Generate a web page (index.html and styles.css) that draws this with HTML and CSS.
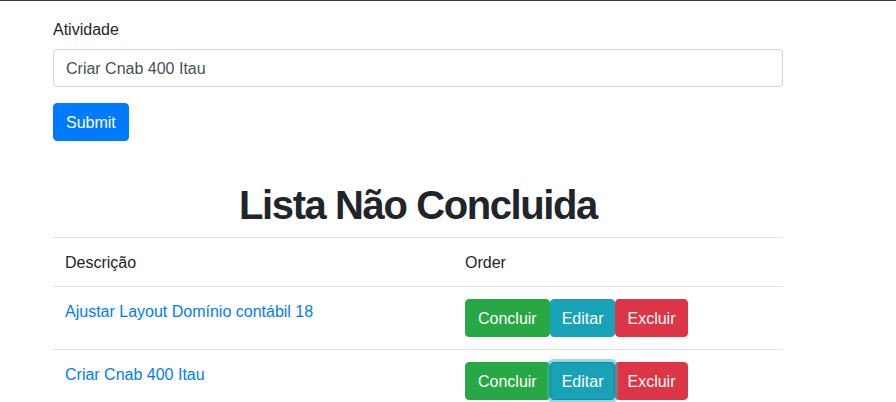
FILE: index.html
```html
<!DOCTYPE html>
<html lang="pt">
<head>
<meta charset="utf-8">
<title>Lista</title>
<link rel="stylesheet" href="styles.css">
</head>
<body>
<div class="topbar"></div>
<div class="container">
  <form class="form">
    <div class="form-group">
      <label class="label" for="atividade">Atividade</label>
      <input class="input" id="atividade" type="text" value="Criar Cnab 400 Itau">
    </div>
    <button type="button" class="btn btn-primary">Submit</button>
  </form>
  <h1 class="title">Lista Não Concluida</h1>
  <table class="table">
    <thead>
      <tr><th class="col-desc">Descrição</th><th>Order</th></tr>
    </thead>
    <tbody>
      <tr>
        <td><a class="link" href="#">Ajustar Layout Domínio contábil 18</a></td>
        <td><div class="actions"><button type="button" class="btn btn-success">Concluir</button><button type="button" class="btn btn-info">Editar</button><button type="button" class="btn btn-danger">Excluir</button></div></td>
      </tr>
      <tr>
        <td><a class="link" href="#">Criar Cnab 400 Itau</a></td>
        <td><div class="actions"><button type="button" class="btn btn-success">Concluir</button><button type="button" class="btn btn-info is-focused">Editar</button><button type="button" class="btn btn-danger">Excluir</button></div></td>
      </tr>
    </tbody>
  </table>
</div>
</body>
</html>
```

FILE: styles.css
```css
* { box-sizing: border-box; }
html, body { margin: 0; padding: 0; }
body {
  font-family: "Liberation Sans", Arial, sans-serif;
  font-size: 16px;
  line-height: 1.5;
  color: #212529;
  background: #fff;
}
.topbar { height: 1px; background: #343a40; }
.container { width: 730px; margin-left: 53px; padding-top: 16px; }
.form { margin: 0; }
.form-group { margin-bottom: 16px; }
.label { display: block; margin-bottom: 8px; height: 24px; padding-top: 1px; }
.input {
  display: block;
  width: 100%;
  height: 38px;
  padding: 7px 12px 5px;
  font: inherit;
  color: #495057;
  background: #fff;
  border: 1px solid #ced4da;
  border-radius: 4px;
  outline: none;
}
.btn {
  display: inline-block;
  font: inherit;
  line-height: 24px;
  padding: 7px 11px 5px;
  border: 1px solid transparent;
  border-radius: 4px;
  color: #fff;
  cursor: pointer;
  height: 38px;
}
.btn-primary { background: #007bff; border-color: #007bff; padding-left: 12px; padding-right: 12px; }
.btn-success { background: #28a745; border-color: #28a745; padding-left: 12px; padding-right: 12px; }
.btn-info { background: #17a2b8; border-color: #17a2b8; }
.btn-danger { background: #dc3545; border-color: #dc3545; }
.btn-info.is-focused { background: #17a2b8; border-color: #138a9c; box-shadow: 0 0 0 3px rgba(58,176,195,.5); position: relative; z-index: 1; }
.title {
  margin: 40px 0 8px;
  font-size: 40px;
  font-weight: 700;
  letter-spacing: -1.4px;
  line-height: 48px;
  text-align: center;
}
.table { width: 100%; border-collapse: collapse; }
.table th, .table td {
  padding: 13px 12px 11px;
  text-align: left;
  vertical-align: top;
  border-top: 1px solid #dee2e6;
  font-weight: 400;
}
.table td { padding-top: 12px; padding-bottom: 12px; }
.col-desc { width: 400px; }
.link { color: #007bff; text-decoration: none; display: inline-block; padding-top: 1px; }
.actions { display: flex; }
```
